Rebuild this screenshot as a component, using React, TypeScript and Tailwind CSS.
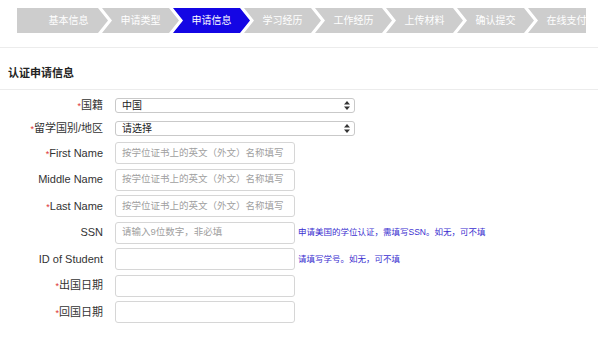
const steps = ["基本信息", "申请类型", "申请信息", "学习经历", "工作经历", "上传材料", "确认提交", "在线支付"];

const font = { fontFamily: '"Liberation Sans", "Noto Sans CJK SC", sans-serif' };

function Step({ label, idx }: { label: string; idx: number }) {
  const first = idx === 0;
  const active = idx === 2;
  // arrow shape: notch on the left (except first), point on the right
  let clip = "polygon(0 0, calc(100% - 10px) 0, 100% 50%, calc(100% - 10px) 100%, 0 100%, 10px 50%)";
  if (first) clip = "polygon(0 0, calc(100% - 10px) 0, 100% 50%, calc(100% - 10px) 100%, 0 100%)";
  return (
    <div
      className={`h-[25px] shrink-0 flex items-center justify-center text-white text-[10px] ${active ? "bg-[#1406e4]" : "bg-[#cdcdcd]"} ${first ? "w-[91px] pl-[12px]" : "w-[77px] ml-[-6px]"}`}
      style={{ clipPath: clip }}
    >
      <span>{label}</span>
    </div>
  );
}

function Label({ text, req }: { text: string; req?: boolean }) {
  return (
    <div className="w-[103px] shrink-0 text-right text-[11px] text-[#333] leading-none">
      {req && <span className="text-[#d33] text-[9px]">*</span>}
      {text}
    </div>
  );
}

function Select({ value }: { value: string }) {
  return (
    <div className="w-[240px] h-[15px] border border-[#c9c9c9] rounded-[3px] bg-white flex items-center justify-between pl-[6px] pr-[4px] text-[10px] text-[#222]">
      <span>{value}</span>
      <svg width="6" height="9" viewBox="0 0 6 9">
        <path d="M0 3.5 L3 0 L6 3.5 Z" fill="#333" />
        <path d="M0 5.5 L3 9 L6 5.5 Z" fill="#333" />
      </svg>
    </div>
  );
}

function Input({ ph }: { ph?: string }) {
  return (
    <div className="w-[180px] h-[22px] border border-[#d6d6d6] rounded-[3px] bg-white flex items-center pl-[6px] text-[9.5px] text-[#a0a0a0] whitespace-nowrap overflow-hidden">
      {ph}
    </div>
  );
}

export default function App() {
  const namePh = "按学位证书上的英文（外文）名称填写";
  const rows: { label: string; req?: boolean; ph?: string; hint?: string }[] = [
    { label: "First Name", req: true, ph: namePh },
    { label: "Middle Name", ph: namePh },
    { label: "Last Name", req: true, ph: namePh },
    { label: "SSN", ph: "请输入9位数字，非必填", hint: "申请美国的学位认证，需填写SSN。如无，可不填" },
    { label: "ID of Student", hint: "请填写学号。如无，可不填" },
    { label: "出国日期", req: true },
    { label: "回国日期", req: true },
  ];

  return (
    <div className="w-[598px] h-[364px] bg-white overflow-hidden" style={font}>
      <div className="pt-[8px] pl-[17px] pr-[12px] pb-[14px] border-b border-[#ececec]">
        <div className="flex overflow-hidden">
          {steps.map((s, i) => (
            <Step key={s} label={s} idx={i} />
          ))}
        </div>
      </div>

      <div className="pt-[18px] pb-[9px] pl-[8px] border-b border-[#ececec]">
        <div className="text-[11px] font-bold text-[#222] leading-[14px]">认证申请信息</div>
      </div>

      <div className="pt-[8px]">
        <div className="flex items-center gap-[12px]">
          <Label text="国籍" req />
          <Select value="中国" />
        </div>
        <div className="flex items-center gap-[12px] mt-[8px]">
          <Label text="留学国别/地区" req />
          <Select value="请选择" />
        </div>

        <div className="flex flex-col gap-[4.5px] mt-[6px]">
          {rows.map((r) => (
            <div key={r.label} className="flex items-center gap-[12px]">
              <Label text={r.label} req={r.req} />
              <Input ph={r.ph} />
              {r.hint && <span className="text-[8.5px] text-[#3b2fd0] ml-[-9px]">{r.hint}</span>}
            </div>
          ))}
        </div>
      </div>
    </div>
  );
}
